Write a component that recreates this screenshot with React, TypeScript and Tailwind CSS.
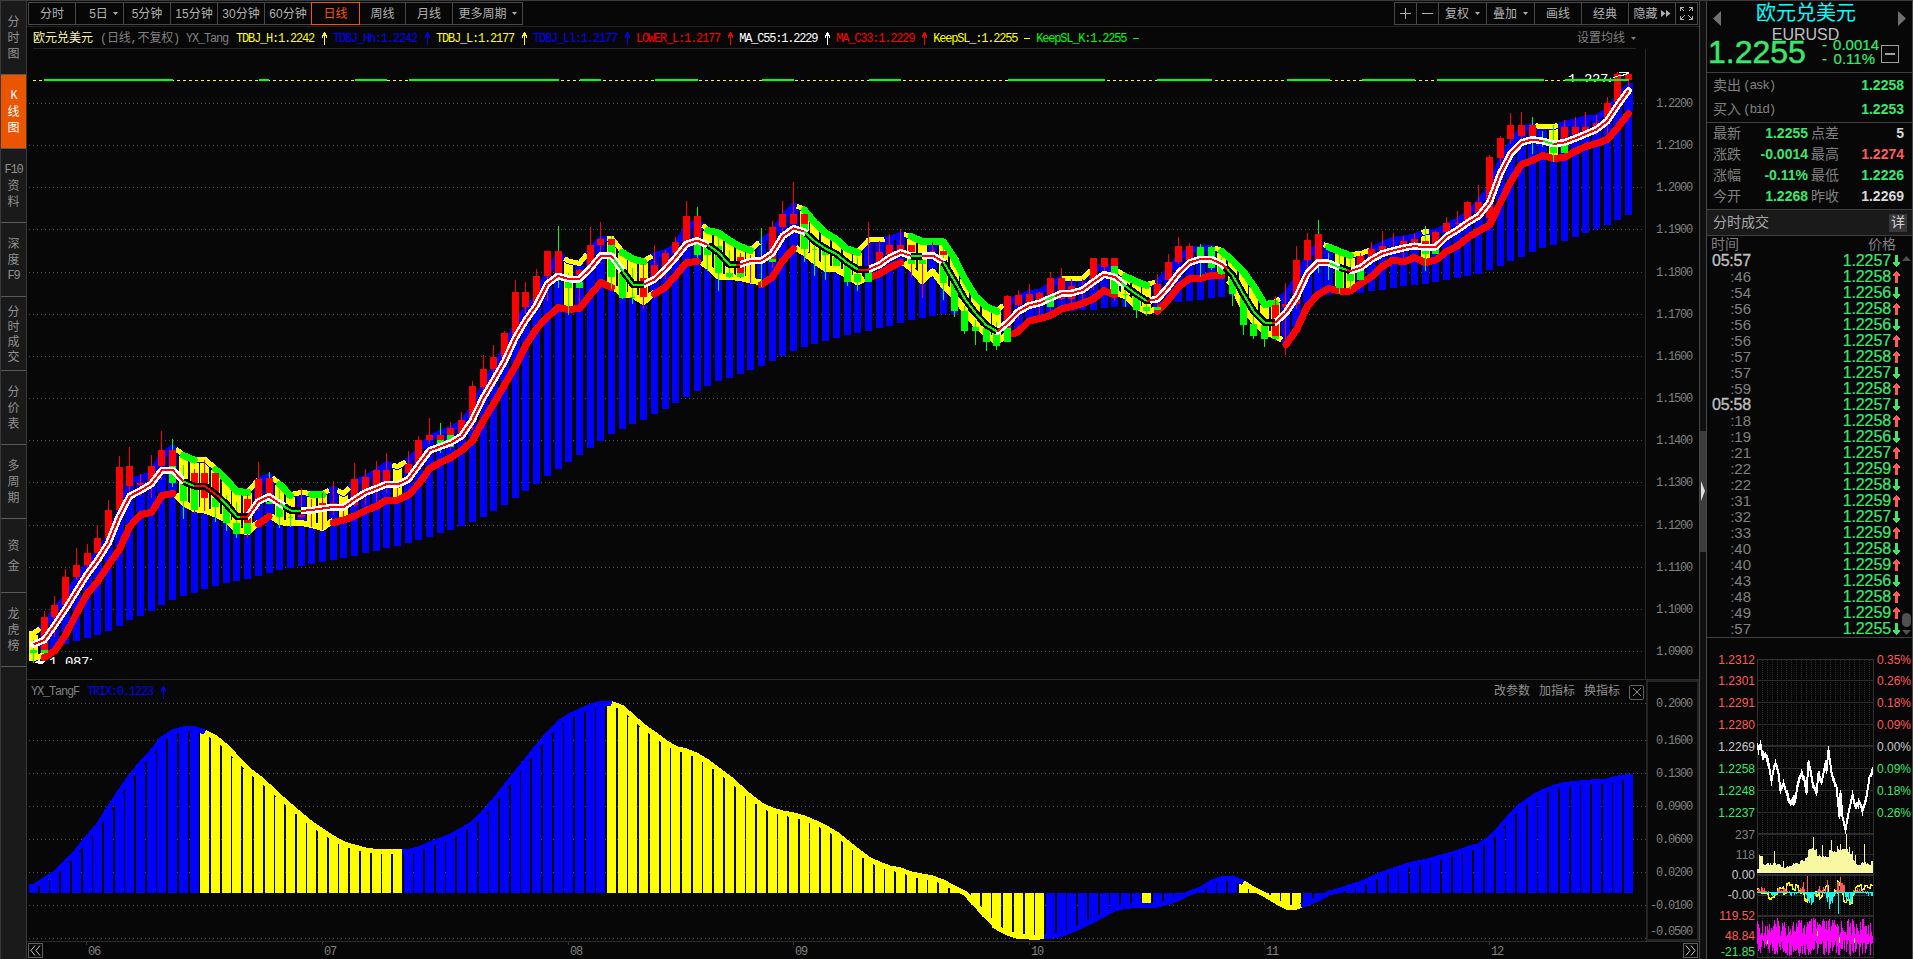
import { ReactNode } from "react";
import { clsx } from "clsx";

const STEP = 10.705;
const barX = (i: number) => 33.5 + i * STEP;

// Every series holds one value per daily bar, in canvas y.
const upper = [
  631.5, 623, 608, 595, 578, 563, 551.5, 535, 510, 478,
  475.5, 471.5, 453, 445, 452.5, 457, 457, 466.5, 476.5, 488.5,
  489.5, 478, 473.5, 481.5, 492.5, 490.5, 491.5, 491.5, 486.5, 491.5,
  480, 475.5, 469.5, 461.5, 464.5, 458.5, 447.5, 435.5, 430, 426.5,
  420, 406.5, 385, 366.5, 346.5, 325, 306.5, 295, 271.5, 252.5,
  259, 261.5, 248, 236, 236, 249.5, 256, 259, 252.5, 250,
  243.5, 225, 219, 227.5, 230, 237.5, 243.5, 247.5, 238.5, 231.5,
  215, 203, 207, 220, 230, 236.5, 246, 249.5, 238, 237.5,
  236.5, 232.5, 233.5, 238.5, 238.5, 239, 255, 276, 293.5, 303.5,
  308.5, 300, 295, 290.5, 289.5, 282.5, 276, 276, 276, 266.5,
  263.5, 267.5, 273.5, 278.5, 282.5, 279.5, 268.5, 255, 247.5, 246,
  245, 248.5, 257.5, 268.5, 283.5, 301.5, 300, 291.5, 276.5, 255,
  241.5, 244, 248.5, 252.5, 251.5, 247.5, 241.5, 237.5, 236, 234,
  229.5, 229.5, 223.5, 218.5, 211.5, 200, 186.5, 160, 141.5, 126.5,
  123.5, 124.5, 124.5, 121.5, 119, 115.5, 115, 108.5, 95, 83.5,
];

const lower = [
  660, 657.5, 650.5, 635, 614, 594, 581.5, 565, 550, 526.5,
  514.5, 512.5, 495.5, 493.5, 505, 511, 512.5, 516.5, 521.5, 531.5,
  534.5, 524, 516.5, 524, 525.5, 525, 527, 530, 522.5, 520,
  516, 510.5, 506.5, 500, 500, 495, 484, 468.5, 462.5, 457.5,
  450.5, 441, 421, 403.5, 385, 366.5, 345, 328.5, 317.5, 307.5,
  309.5, 308.5, 295, 282.5, 287.5, 296, 297.5, 304, 294, 287.5,
  275.5, 262.5, 261.5, 268.5, 278.5, 279, 280, 282.5, 284.5, 277.5,
  260.5, 248.5, 255, 263.5, 271, 271.5, 277.5, 284.5, 278, 274,
  267.5, 262.5, 270.5, 283, 273.5, 287.5, 298, 313, 326.5, 336.5,
  344, 336, 331.5, 321, 318.5, 315.5, 309, 306.5, 303.5, 299,
  290.5, 295, 298, 308.5, 313.5, 311.5, 300, 286.5, 278.5, 278.5,
  275.5, 275.5, 287, 310, 323, 334, 338, 344.5, 329.5, 306,
  294.5, 288.5, 291, 291, 283.5, 276.5, 266.5, 260, 262, 257.5,
  262.5, 260, 251.5, 246, 237.5, 231, 225, 203.5, 181.5, 164.5,
  160.5, 155.5, 158.5, 157.5, 151.5, 146.5, 143.5, 139.5, 127.5, 113.5,
];

const middle = [
  644.3, 640, 625, 609, 591.5, 574.5, 560, 543, 516.5, 496,
  490.5, 484, 470, 470, 481.5, 486, 486, 494, 504, 516.5,
  516.5, 501.5, 496.5, 503.5, 510.5, 511, 510, 508.5, 507, 507,
  499.5, 492.5, 488.5, 484, 484.5, 479.5, 465, 450.5, 446.5, 442.5,
  436, 420, 398, 380, 361.5, 338, 320, 305, 284, 276,
  279, 279, 268.5, 255.5, 256, 270.5, 284.5, 284.5, 279.5, 269.5,
  257.5, 244, 240.5, 245, 252.5, 264.5, 264.5, 261, 260.5, 253.5,
  236, 228.5, 231.5, 241.5, 248.5, 254, 262.5, 269.5, 269.5, 265,
  257.5, 252.5, 256, 256, 255.5, 262, 280, 299, 313, 325,
  331.5, 322.5, 311.5, 305.5, 303, 298, 293.5, 293, 290, 282,
  274.5, 277, 286, 294, 301, 299, 287, 273, 262.5, 259,
  259, 264, 275, 294, 311.5, 322.5, 322.5, 312.5, 296.5, 273.5,
  262.5, 263, 267.5, 271, 267.5, 259.5, 253.5, 250.5, 248, 246,
  247.5, 247, 236.5, 230, 222.5, 216, 202.5, 174, 153.5, 142.5,
  139.5, 141, 144, 142.5, 138.5, 134, 129.5, 121, 105, 90.5,
];

const base = [
  650, 648, 646, 643.5, 641, 637.5, 635, 631, 625.5, 620,
  615.5, 610.5, 605, 599.5, 595.5, 593, 589, 586, 583, 581,
  579, 576, 573, 570, 567.5, 566, 564, 562, 560, 558,
  556, 553, 551, 548, 546, 543, 540, 537, 533, 530,
  526, 522, 517, 511, 505, 497.5, 491, 484, 476, 469,
  461.5, 455, 448, 440.5, 434, 429, 423.5, 420, 414, 409,
  403, 397, 391, 386, 381, 378, 374, 370, 366, 361,
  356, 351, 347, 344, 341, 338, 335, 333, 331, 328,
  325.5, 323, 320, 317.5, 315.5, 313.5, 313.5, 313.5, 313.5, 313.5,
  313.5, 313.5, 313.5, 313, 313, 312, 311.5, 311, 310, 309.5,
  308, 306.5, 306.5, 306, 305, 304, 303, 302, 301, 299.5,
  297.5, 297, 296, 296, 296, 296, 296, 296, 296, 296,
  295.5, 295, 294, 293.5, 293, 291, 289.5, 287.5, 285.5, 284.5,
  283.5, 281.5, 279.5, 277.5, 275.5, 273.5, 269.5, 265.5, 260.5, 256.5,
  251.5, 247.5, 245, 241, 237, 233, 229, 225, 220, 215,
];

const trix = [
  884, 877.5, 870.5, 860, 849, 835.5, 823.5, 806.5, 790, 775,
  761.5, 750, 736.5, 729.5, 726.5, 726, 729.5, 735, 744, 755,
  766.5, 774.5, 784, 794, 803.5, 812.5, 821.5, 828.5, 835.5, 841.5,
  844.5, 847.5, 849, 849, 849.5, 849, 846.5, 841.5, 837.5, 833.5,
  827.5, 821, 811, 798.5, 785, 771.5, 758.5, 745, 732.5, 721,
  713.5, 708.5, 704, 700.5, 701, 705, 714.5, 724, 731.5, 739.5,
  746, 748.5, 753, 759.5, 767.5, 775.5, 785, 794.5, 802.5, 807.5,
  810.5, 812.5, 815.5, 820, 825, 831.5, 840, 848.5, 856.5, 861.5,
  865.5, 867.5, 871.5, 873.5, 875.5, 879.5, 885.5, 895, 907, 919,
  930, 935.5, 939, 939.5, 939.5, 939, 937, 933, 928, 923,
  917, 911.5, 909, 908, 907.5, 907.5, 905, 901, 895, 887,
  880, 876, 875.5, 880, 887, 897, 903.5, 909.5, 909.5, 906,
  901.5, 895, 888, 884, 881, 876, 871.5, 867.5, 864, 861,
  859, 856, 853, 850, 846, 843, 836.5, 825, 813, 802.5,
  795, 789, 785, 782, 781, 780, 779, 778.5, 775.5, 774,
];

// high, body top, body bottom, low, colour, then an optional green lower body
type Candle = [number, number, number, number, "r" | "g", number?, number?];
const candles: Candle[] = [
  [640, 650, 653, 663, "g"], [611, 617, 650, 653, "r", 650, 653], [596, 605, 617, 637, "r"], [569, 577, 605, 612, "r"], [548, 565, 577, 580, "r"],
  [544, 553, 565, 575, "r"], [525, 538, 553, 560, "r"], [500, 510, 538, 545, "r"], [456, 467, 510, 516, "r"], [447, 466, 486, 496, "r"],
  [474, 483, 485, 496, "r"], [455, 466, 484, 498, "r"], [431, 450, 466, 480, "r"], [439, 450, 466, 487, "g", 466, 483], [465, 482, 501, 519, "g"],
  [469, 473, 484, 513, "r", 488, 510], [460, 473, 498, 511, "r"], [472, 473, 494, 522, "g", 498, 507], [495, 503, 523, 531, "g"], [502, 523, 534, 538, "g"],
  [495, 499, 523, 538, "r", 523, 534], [462, 479, 499, 511, "r"], [472, 478, 496, 504, "g", 502, 504], [490, 505, 517, 528, "g"], [505, 517, 518, 527, "g"],
  [488, 515, 517, 518, "r"], [499, 510, 511, 527, "r"], [493, 503, 506, 530, "r"], [481, 503, 505, 515, "r"], [503, 507, 508, 518, "r"],
  [463, 479, 505, 507, "r"], [469, 477, 490, 505, "r"], [461, 470, 490, 502, "r"], [453, 470, 484, 493, "r"], [482, 487, 488, 498, "r"],
  [451, 464, 473, 483, "r"], [436, 440, 464, 466, "r"], [418, 435, 440, 444, "r"], [423, 435, 440, 453, "g", 440, 445], [422, 428, 435, 450, "r", 435, 447],
  [412, 420, 433, 438, "r"], [381, 386, 420, 430, "r"], [355, 369, 387, 395, "r"], [345, 357, 369, 377, "r"], [331, 333, 357, 362, "r"],
  [280, 292, 336, 340, "r"], [282, 292, 307, 314, "r"], [269, 276, 307, 308, "r"], [251, 251, 276, 301, "r"], [226, 251, 275, 288, "g"],
  [273, 281, 288, 315, "g"], [269, 270, 275, 303, "r", 282, 288], [227, 245, 268, 270, "r"], [222, 239, 245, 263, "r"], [236, 239, 245, 289, "g", 245, 277],
  [270, 272, 298, 299, "g"], [268, 297, 298, 304, "g"], [264, 278, 297, 309, "r"], [245, 265, 278, 280, "r"], [250, 253, 267, 279, "r"],
  [237, 242, 253, 256, "r"], [201, 216, 242, 244, "r"], [207, 216, 238, 258, "g", 244, 255], [244, 245, 255, 271, "g"], [237, 246, 273, 291, "g"],
  [250, 273, 277, 278, "g"], [253, 257, 273, 278, "r", 273, 277], [255, 258, 259, 283, "r"], [228, 258, 259, 287, "g"], [221, 227, 259, 268, "r", 259, 262],
  [201, 214, 227, 234, "r"], [182, 214, 224, 228, "r"], [214, 214, 224, 262, "g", 224, 249], [238, 249, 250, 276, "g"], [247, 250, 255, 280, "g"],
  [254, 257, 266, 266, "g"], [262, 265, 282, 286, "g"], [257, 274, 282, 291, "g"], [222, 265, 266, 282, "r", 272, 282], [241, 252, 263, 265, "r"],
  [234, 245, 255, 258, "r"], [229, 245, 252, 254, "r"], [245, 245, 252, 277, "r", 257, 264], [258, 260, 264, 298, "r", 260, 264], [242, 251, 252, 257, "r"],
  [248, 251, 255, 300, "g", 260, 283], [280, 283, 311, 317, "g"], [306, 311, 331, 334, "g"], [320, 327, 331, 345, "g"], [322, 328, 342, 351, "g"],
  [322, 333, 346, 350, "g"], [295, 296, 328, 330, "r", 328, 342], [290, 295, 305, 320, "r"], [284, 294, 305, 307, "r"], [292, 293, 300, 315, "r"],
  [272, 278, 300, 311, "r", 300, 307], [268, 278, 299, 300, "r"], [279, 286, 299, 303, "r"], [279, 289, 290, 300, "r"], [258, 258, 280, 290, "r"],
  [258, 258, 267, 274, "r"], [258, 258, 266, 301, "r", 266, 294], [288, 294, 295, 307, "g"], [290, 292, 310, 318, "g"], [303, 307, 311, 316, "g"],
  [274, 284, 300, 306, "r", 307, 310], [254, 262, 280, 287, "r"], [237, 246, 262, 264, "r"], [243, 246, 260, 262, "r"], [244, 247, 257, 277, "g"],
  [246, 247, 268, 270, "g"], [257, 265, 274, 275, "g"], [272, 278, 294, 306, "g"], [290, 294, 325, 335, "g"], [315, 324, 336, 339, "g"],
  [322, 325, 339, 347, "g"], [296, 305, 336, 341, "r", 336, 339], [283, 304, 307, 355, "r"], [246, 260, 304, 309, "r"], [233, 240, 260, 270, "r"],
  [220, 234, 263, 273, "g"], [253, 262, 263, 280, "g"], [253, 269, 288, 294, "g"], [260, 273, 281, 289, "g"], [253, 256, 267, 268, "r", 270, 280],
  [242, 249, 258, 260, "r"], [231, 246, 250, 253, "r"], [233, 247, 248, 250, "r"], [236, 241, 247, 258, "r"], [233, 239, 245, 247, "r"],
  [226, 241, 245, 271, "g", 250, 254], [231, 232, 247, 248, "r", 249, 254], [217, 223, 232, 236, "r"], [211, 223, 224, 233, "r"], [201, 202, 220, 223, "r"],
  [185, 202, 213, 216, "r"], [155, 157, 218, 220, "r"], [136, 138, 158, 168, "r"], [113, 125, 139, 144, "r"], [112, 125, 136, 142, "r"],
  [117, 125, 138, 154, "g"], [131, 140, 141, 147, "g"], [125, 147, 153, 162, "g"], [120, 127, 140, 142, "r", 145, 153], [117, 127, 135, 138, "r"],
  [112, 127, 134, 137, "r"], [115, 123, 129, 135, "r"], [97, 103, 120, 135, "r"], [72, 74, 102, 105, "r"], [72, 74, 80, 90, "r"],
];

type Range = [number, number];
const yellowBars: Range[] = [[0, 0], [14, 20], [23, 24], [26, 27], [29, 29], [34, 34], [50, 50], [54, 57], [63, 67], [72, 77], [82, 83], [85, 90], [101, 104], [111, 116], [122, 123], [130, 130], [142, 142]];
const yellowTop: Range[] = [[-0.4, 0.6], [13.3, 21], [22.3, 27.6], [28.4, 29.5], [33.5, 34.8], [49.6, 51.7], [53.6, 57.8], [62.5, 67.8], [71.3, 79.5], [81.3, 90.6], [96, 99.3], [101, 104.8], [110.3, 116.4], [120.5, 124.8], [129.7, 130.4], [140.3, 142.4]];
const yellowBottom: Range[] = [[-0.4, 1], [13.3, 21], [22.2, 28], [54, 58], [62.4, 68], [71.2, 77.6], [81.3, 91], [101, 105], [111.6, 116.6]];
const redBand: Range[] = [[1, 13], [21, 22], [28, 54], [58, 62], [68, 71], [78, 81], [91.5, 101], [105, 111], [117, 149]];
const greenBand: Range[] = [[14, 15], [17, 20], [23, 24], [26, 27], [55, 57], [63, 67], [72, 77], [82, 90], [102, 104], [111, 116], [121, 123]];
const blackMid: Range[] = [[14, 20], [23.4, 25], [55, 57], [63, 66], [72.2, 78], [82, 83], [85, 90], [102, 104.3], [111.3, 116], [122, 123]];
const greenMid: Range[] = [[14, 15], [17.5, 19.3], [23, 25], [54.2, 57], [63, 65.6], [72, 77], [82, 83], [85, 90], [94.5, 95.4], [101.6, 104], [111.5, 115.7], [121, 122.7], [141, 142]];
const keepGreen: Range[] = [[44, 173], [259, 269], [355, 387], [409, 559], [580, 601], [655, 698], [762, 794], [869, 901], [1008, 1105], [1157, 1212], [1287, 1330], [1362, 1415], [1437, 1544], [1565, 1629]];
const trixYellow: Range[] = [[16, 34], [54, 94], [104, 104], [113, 118]];
const trixYellowLine: Range[] = [[16, 34.4], [54, 94.4], [113, 118.4]];

const inside = (ranges: Range[], i: number) => ranges.some(([a, b]) => i >= a && i <= b);

function valueAt(data: number[], p: number) {
  const c = Math.max(0, Math.min(data.length - 1, p));
  const i = Math.floor(c);
  const next = data[Math.min(i + 1, data.length - 1)];
  return data[i] + (next - data[i]) * (c - i);
}

function points(data: number[], [a, b]: Range, offset = 0) {
  const stops = [a];
  for (let i = Math.floor(a) + 1; i < b; i++) stops.push(i);
  stops.push(b);
  return stops.map((p) => `${barX(p).toFixed(1)},${(valueAt(data, p) + offset).toFixed(1)}`).join(" ");
}

interface TraceProps {
  data: number[];
  ranges: Range[];
  color: string;
  width: number;
  offset?: number;
  cap?: "round" | "butt";
}

function Trace({ data, ranges, color, width, offset = 0, cap = "butt" }: TraceProps) {
  return (
    <g fill="none" stroke={color} strokeWidth={width} strokeLinecap={cap} strokeLinejoin="round">
      {ranges.map((r) => (
        <polyline key={r[0]} points={points(data, r, offset)} />
      ))}
    </g>
  );
}

const all: Range[] = [[0, 149]];
const mainGrid = [103, 145, 187, 229, 272, 314, 356, 398, 440, 482, 525, 567, 609, 651];
const lowerGrid = [703, 740, 773, 806, 839, 872, 905, 938];
const lowerLabels = ["0.2000", "0.1600", "0.1300", "0.0900", "0.0600", "0.0200", "-0.0100", "-0.0500"];
const mono = "font-['Liberation_Mono','Noto_Sans_CJK_SC',monospace] text-[12px] tracking-[-1.2px]";
const monoLarge = "font-['Liberation_Mono',monospace] text-[14px] tracking-[-0.4px]";

function Grid({ rows }: { rows: number[] }) {
  return (
    <g stroke="#505050" strokeDasharray="1 3">
      {rows.map((y) => (
        <line key={y} x1="29" x2="1648" y1={y + 0.5} y2={y + 0.5} />
      ))}
    </g>
  );
}

function MainChart() {
  return (
    <svg className="block h-[630px] w-[1672px]" viewBox="27 49 1672 630" shapeRendering="crispEdges">
      <Grid rows={mainGrid} />
      <line x1="33" x2="1629" y1="80.5" y2="80.5" stroke="#ffff00" strokeDasharray="3 3" />

      {base.map((b, i) => (
        <rect
          key={i}
          x={Math.round(barX(i) - 3.5)}
          y={upper[i] + 2}
          width="7"
          height={Math.max(b, lower[i]) - upper[i] - 2}
          fill="#0000ff"
        />
      ))}
      {upper.map((u, i) => (
        <rect
          key={i}
          x={Math.round(barX(i) - 4.5)}
          y={u + 3}
          width="9"
          height={lower[i] - u - 6}
          fill={inside(yellowBars, i) ? "#ffff00" : "#0000ff"}
        />
      ))}
      <Trace data={upper} ranges={[[0.6, 149.4]]} color="#0000ff" width={6} offset={2.5} />
      <Trace data={upper} ranges={yellowTop} color="#ffff00" width={5} offset={2} />
      <Trace data={lower} ranges={yellowBottom} color="#ffff00" width={6} offset={-2} />
      <rect x="29" y="633" width="5" height="27" fill="#ffff00" />
      <Trace data={lower} ranges={redBand} color="#ff0000" width={7} cap="round" />
      <Trace data={upper} ranges={greenBand} color="#00ff00" width={7} offset={3} cap="round" />

      {candles.map(([high, top, bottom, low, color, gTop, gBottom], i) => {
        const x = Math.round(barX(i) - 3.5);
        const fill = color === "r" ? "#ff0000" : "#00ff00";
        const split = gTop !== undefined && gBottom !== undefined;
        const wickOnly = bottom - top <= 1;
        const redTop = split || i === 49 || i === 120 || i === 140;
        return (
          <g key={i}>
            <rect x={x + 3} y={high} width="1" height={Math.max(low - high, 1)} fill={fill} />
            {!(wickOnly && split) && (
              <rect
                x={wickOnly ? x + 1 : x}
                y={top}
                width={wickOnly ? 5 : 7}
                height={bottom - top}
                fill={redTop ? "#ff0000" : fill}
              />
            )}
            {split && <rect x={x} y={gTop} width="7" height={gBottom - gTop} fill="#00ff00" />}
          </g>
        );
      })}

      <Trace data={middle} ranges={all} color="#ffffff" width={7} cap="round" />
      <Trace data={middle} ranges={blackMid} color="#000000" width={7} />
      <Trace data={middle} ranges={all} color="#ff0000" width={2} />
      <Trace data={middle} ranges={greenMid} color="#00ff00" width={2} />

      <svg x="1560" y="70" width="51" height="12" viewBox="1560 70 51 12">
        <text x="1568" y="84" fill="#fff" className={monoLarge}>1.2274</text>
      </svg>
      <svg x="44" y="655" width="48" height="9" viewBox="44 655 48 9">
        <text x="49" y="667" fill="#fff" className={monoLarge}>1.0871</text>
      </svg>
      <path d="M1613 78l7-3M1619 72h9v1h-2v1h-3v1h-3" stroke="#fff" fill="none" />
      <path d="M34 663l6-4v2h5l-3 3z" fill="#fff" />

      {keepGreen.map(([a, b]) => (
        <rect key={a} x={a} y="79" width={b - a} height="2" fill="#00ff00" />
      ))}

      <line x1="1645.5" x2="1645.5" y1="49" y2="679" stroke="#2a2a2a" />
      {mainGrid.map((y, i) => (
        <text key={y} x="1692" y={y + 4} textAnchor="end" fill="#808080" className={mono}>
          {(1.22 - i * 0.01).toFixed(4)}
        </text>
      ))}
    </svg>
  );
}

function TrixChart() {
  const zero = 893;
  const inner = trix.map((t) => t + Math.max(-2.5, Math.min(2.5, zero - t)));
  return (
    <svg className="block h-[261px] w-[1672px]" viewBox="27 680 1672 261" shapeRendering="crispEdges">
      <Grid rows={lowerGrid} />
      {inner.map((t, i) => (
        <rect
          key={i}
          x={Math.round(barX(i) - 4.5)}
          y={Math.min(t, zero)}
          width="9"
          height={Math.abs(zero - t)}
          fill={inside(trixYellow, i) ? "#ffff00" : "#0000ff"}
        />
      ))}
      <Trace data={inner} ranges={[[-0.4, 149.4]]} color="#0000ff" width={5} />
      <Trace data={inner} ranges={trixYellowLine} color="#ffff00" width={5} />
      <rect x="1647" y="681" width="51" height="258.5" fill="#070707" stroke="#242424" strokeWidth="2" />
      {lowerGrid.map((y, i) => (
        <text key={y} x="1692" y={(i === 7 ? 931 : y) + 4} textAnchor="end" fill="#808080" className={mono}>
          {lowerLabels[i]}
        </text>
      ))}
    </svg>
  );
}

function Caret({ className }: { className?: string }) {
  return (
    <svg className={clsx("h-[3px] w-[5px]", className)} viewBox="0 0 5 3">
      <path d="M0 0h5L2.5 3z" fill="currentColor" />
    </svg>
  );
}

const periods = [
  { label: "分时", width: "w-[48px]" },
  { label: "5日", width: "w-[49px]", caret: true },
  { label: "5分钟", width: "w-[48px]" },
  { label: "15分钟", width: "w-[48px]" },
  { label: "30分钟", width: "w-[48px]" },
  { label: "60分钟", width: "w-[48px]" },
  { label: "日线", width: "w-[49px]", active: true },
  { label: "周线", width: "w-[47px]" },
  { label: "月线", width: "w-[48px]" },
  { label: "更多周期", width: "w-[71px]", caret: true },
];

const tools: { content: ReactNode; width: string }[] = [
  {
    width: "w-[23px]",
    content: <svg className="size-[11px]" viewBox="0 0 11 11" shapeRendering="crispEdges"><path d="M0 5.5h11M5.5 0v11" stroke="currentColor" /></svg>,
  },
  {
    width: "w-[23px]",
    content: <svg className="size-[11px]" viewBox="0 0 11 11" shapeRendering="crispEdges"><path d="M0 5.5h11" stroke="currentColor" /></svg>,
  },
  { width: "w-[49px]", content: <>复权<Caret className="ml-1.5" /></> },
  { width: "w-[49px]", content: <>叠加<Caret className="ml-1.5" /></> },
  { width: "w-[48px]", content: "画线" },
  { width: "w-[48px]", content: "经典" },
  {
    width: "w-[48px]",
    content: <>隐藏<svg className="ml-[3px] h-[7px] w-[10px]" viewBox="0 0 10 7"><path d="M0 0l4.5 3.5L0 7zM5 0l4.5 3.5L5 7z" fill="currentColor" /></svg></>,
  },
  {
    width: "w-[23px]",
    content: (
      <svg className="size-[13px]" viewBox="0 0 13 13" fill="none" stroke="currentColor" shapeRendering="crispEdges">
        <path d="M.5 4V.5H4M.5.5l4 4M9 .5h3.5V4M12.500 .5l-4 4M.5 9v3.500H4M.5 12.500l4-4M12.500 9v3.500H9M12.500 12.500l-4-4" />
      </svg>
    ),
  },
];

function Toolbar() {
  return (
    <div className="flex h-[26px] justify-between border-b border-[#222] pt-[1px] pr-px pl-px text-[12px] text-[#b0b0b0]">
      <div className="flex">
        {periods.map((p) => (
          <div
            key={p.label}
            className={clsx(
              "-mr-px flex h-[23px] items-center justify-center border whitespace-nowrap",
              p.width,
              p.active ? "relative z-10 border-[#f05a00] text-[#f05a00]" : "border-[#484848]",
              p.label === "5日" && "pl-2"
            )}
          >
            {p.label}
            {p.caret && <Caret className="ml-[5px]" />}
          </div>
        ))}
      </div>
      <div className="flex pr-px">
        {tools.map((t, i) => (
          <div key={i} className={clsx("-mr-px flex h-[23px] items-center justify-center border border-[#484848]", t.width)}>
            {t.content}
          </div>
        ))}
      </div>
    </div>
  );
}

function UpArrow() {
  return (
    <svg className="mr-[2px] ml-[5px] h-[13px] w-[12px] shrink-0" viewBox="0 0 12 13" fill="none" stroke="currentColor" shapeRendering="crispEdges">
      <path d="M5.500 13V0M4.500 1v3M6.500 1v3M3.500 3v3M7.500 3v3" />
    </svg>
  );
}

const indicators = [
  { text: "TDBJ_H:1.2242", color: "text-[#ffff00]" },
  { text: "TDBJ_Hh:1.2242", color: "text-[#0000ff]" },
  { text: "TDBJ_L:1.2177", color: "text-[#ffff00]" },
  { text: "TDBJ_Ll:1.2177", color: "text-[#0000ff]" },
  { text: "LOWER_L:1.2177", color: "text-[#ff0000]" },
  { text: "MA_C55:1.2229", color: "text-white" },
  { text: "MA_C33:1.2229", color: "text-[#ff0000]" },
  { text: "KeepSL_:1.2255", color: "text-[#ffff00]", dash: true },
  { text: "KeepSL_K:1.2255", color: "text-[#00ff00]", dash: true },
];

function IndicatorRow() {
  return (
    <div className={clsx("ml-[6px] flex h-[22px] w-[1603px] items-center border-b border-[#262626] pt-[2px] whitespace-nowrap", mono)}>
      <span className="w-[67px] tracking-normal text-[#ffffa0]">欧元兑美元</span>
      <span className="w-[86px] tracking-[-0.2px] text-[#808080]">(日线,不复权)</span>
      <span className="w-[50px] text-[#808080]">YX_Tang</span>
      {indicators.map((n) => (
        <span key={n.text} className={clsx("flex items-center", n.color)}>
          {n.text}
          {n.dash ? <span className="mr-[6px] ml-[7px] h-px w-[6px] bg-current" /> : <UpArrow />}
        </span>
      ))}
      <span className="ml-auto flex items-center tracking-normal text-[#808080]">
        设置均线
        <Caret className="ml-[6px]" />
      </span>
    </div>
  );
}

const sideItems = [
  ["分", "时", "图"],
  ["K", "线", "图"],
  ["F10", "资", "料"],
  ["深", "度", "F9"],
  ["分", "时", "成", "交"],
  ["分", "价", "表"],
  ["多", "周", "期"],
  ["资", "金"],
  ["龙", "虎", "榜"],
];

function Sidebar() {
  return (
    <div className="flex h-full w-[27px] flex-col border-r border-l border-[#3a3a3a] bg-[#1a1a1a]">
      {sideItems.map((chars, i) => (
        <div
          key={i}
          className={clsx(
            "flex h-[74px] flex-col items-center justify-center border-b border-[#585858] pt-px text-[12px]",
            i === 1 ? "bg-[#eb5500] text-white" : "text-[#909090]"
          )}
        >
          {chars.map((c, n) => (
            <span
              key={n}
              className={clsx(
                "flex items-center",
                chars.length === 2 ? "h-[20px]" : chars.length === 4 ? "h-[15px]" : "h-[16px]",
                /[A-Z]/.test(c) && mono
              )}
            >
              {c}
            </span>
          ))}
        </div>
      ))}
    </div>
  );
}

const months = [
  { label: "06", width: "w-[236px]" },
  { label: "07", width: "w-[246px]" },
  { label: "08", width: "w-[225px]" },
  { label: "09", width: "w-[236px]" },
  { label: "10", width: "w-[235px]" },
  { label: "11", width: "w-[225px]" },
  { label: "12", width: "w-[60px]" },
];

function MonthAxis() {
  return (
    <div className="flex h-[18px] border-t border-[#2c2c2c] pl-px text-[#808080]">
      <div className="mt-px flex size-[15px] items-center justify-center border border-[#606060] text-[#c8c8c8]">
        <svg className="size-[11px]" viewBox="0 0 11 11" fill="none" stroke="currentColor"><path d="M5 0.500L1 5.500l4 5M10 0.500L6 5.500l4 5" /></svg>
      </div>
      <div className="ml-[43px] flex flex-1">
        {months.map((m) => (
          <div key={m.label} className={clsx("flex items-center", m.width, mono)}>
            <span className="h-[3px] w-px self-start bg-[#333]" />
            <span className="ml-px pt-[2px]">{m.label}</span>
          </div>
        ))}
      </div>
      <div className="mt-px mr-px flex size-[15px] items-center justify-center border border-[#606060] text-[#c8c8c8]">
        <svg className="size-[11px]" viewBox="0 0 11 11" fill="none" stroke="currentColor"><path d="M1 0.500l4 5-4 5M6 0.500l4 5-4 5" /></svg>
      </div>
    </div>
  );
}

const stats = [
  ["最新", "1.2255", "点差", "5", "text-[#d8d8d8]"],
  ["涨跌", "-0.0014", "最高", "1.2274", "text-[#ff5a5a]"],
  ["涨幅", "-0.11%", "最低", "1.2226", "text-[#3ce66e]"],
  ["今开", "1.2268", "昨收", "1.2269", "text-[#d8d8d8]"],
];

const ticks: [string, string, boolean][] = [
  ["05:57", "1.2257", false], [":46", "1.2258", true], [":54", "1.2256", false], [":56", "1.2258", true],
  [":56", "1.2256", false], [":56", "1.2257", true], [":57", "1.2258", true], [":57", "1.2257", false],
  [":59", "1.2258", true], ["05:58", "1.2257", false], [":18", "1.2258", true], [":19", "1.2256", false],
  [":21", "1.2257", true], [":22", "1.2259", true], [":22", "1.2258", false], [":31", "1.2259", true],
  [":32", "1.2257", false], [":33", "1.2259", true], [":40", "1.2258", false], [":40", "1.2259", true],
  [":43", "1.2256", false], [":48", "1.2258", true], [":49", "1.2259", true], [":57", "1.2255", false],
];

function TickArrow({ up }: { up: boolean }) {
  return (
    <svg className={clsx("ml-[2px] h-[12px] w-[7px]", up ? "text-[#ff5a5a]" : "rotate-180 text-[#3ce66e]")} viewBox="0 0 7 12" shapeRendering="crispEdges">
      <path d="M3 0h1v1h1v1h1v1h1v2H5v7H2V5H0V3h1V2h1V1h1z" fill="currentColor" />
    </svg>
  );
}

const leftLabels: [string, number, string][] = [
  ["1.2312", 660, "#ff5a5a"], ["1.2301", 681, "#ff5a5a"], ["1.2291", 703, "#ff5a5a"], ["1.2280", 725, "#ff5a5a"],
  ["1.2269", 747, "#c8c8c8"], ["1.2258", 769, "#3ce66e"], ["1.2248", 791, "#3ce66e"], ["1.2237", 813, "#3ce66e"],
  ["237", 835, "#808080"], ["118", 855, "#808080"], ["0.00", 875, "#c8c8c8"], ["-0.00", 895, "#c8c8c8"],
  ["119.52", 916, "#ff5a5a"], ["48.84", 936, "#ff5a5a"], ["-21.85", 952, "#3ce66e"],
];
const rightLabels: [string, number, string][] = [
  ["0.35%", 660, "#ff5a5a"], ["0.26%", 681, "#ff5a5a"], ["0.18%", 703, "#ff5a5a"], ["0.09%", 725, "#ff5a5a"],
  ["0.00%", 747, "#c8c8c8"], ["0.09%", 769, "#3ce66e"], ["0.18%", 791, "#3ce66e"], ["0.26%", 813, "#3ce66e"],
];

const intraday = [
  [0, 745], [1, 750], [3, 744], [5, 756], [8, 755], [11, 763], [14, 781], [16, 770], [18, 763], [21, 773],
  [23, 791], [26, 783], [29, 793], [33, 803], [38, 799], [40, 785], [44, 773], [47, 780], [49, 793], [51, 762],
  [53, 770], [55, 783], [59, 793], [61, 773], [64, 783], [68, 763], [69, 771], [71, 750], [74, 773], [76, 780],
  [79, 787], [82, 817], [83, 793], [85, 817], [88, 830], [91, 813], [95, 795], [98, 807], [102, 802], [105, 811],
  [109, 797], [112, 777], [115, 771],
];

const noise = (n: number) => {
  const s = Math.sin(n * 12.9898) * 43758.5453;
  return s - Math.floor(s);
};

function intradayAt(x: number) {
  const n = intraday.findIndex((p) => p[0] >= x);
  if (n <= 0) return intraday[0][1];
  const [x0, y0] = intraday[n - 1];
  const [x1, y1] = intraday[n];
  return y0 + ((y1 - y0) * (x - x0)) / (x1 - x0);
}

const volume = [18, 17, 19, 8, 10, 8, 22, 9, 8, 12, 6, 5, 7, 8, 10, 9, 13, 12, 16, 33, 24, 36, 24, 18, 28, 17, 16, 33, 26, 22, 27, 29, 24, 39, 26, 22, 18, 12, 8, 10, 29, 10, 8, 12];

function MiniChart() {
  const xs = Array.from({ length: 116 }, (_, i) => i);
  // The two MACD lines swing wider through the busy middle of the session.
  const swing = (x: number, seed: number) => {
    const amp = x > 44 && x < 98 ? 13 : 7;
    return 892 - (Math.sin(x / 6 + 2.2) * 0.5 + (noise(Math.floor(x / 3) + seed) - 0.5) * 1.6) * amp;
  };
  return (
    <svg className="block h-[321px] w-[205px]" viewBox="1707 638 205 321" shapeRendering="crispEdges">
      <g stroke="#2c2c2c" strokeDasharray="1 1">
        {Array.from({ length: 23 }, (_, i) => (
          <line key={i} x1={Math.round(1762 + i * 4.85) + 0.5} x2={Math.round(1762 + i * 4.85) + 0.5} y1="660" y2="957" />
        ))}
      </g>
      <g stroke="#2c2c2c">
        {[680.5, 702.5, 724.5, 768.5, 790.5, 812.5, 854.5, 895.5, 936.5].map((y) => (
          <line key={y} x1="1757" x2="1874" y1={y} y2={y} />
        ))}
      </g>
      <g stroke="#2c2c2c" strokeWidth="2">
        {[746, 834, 875, 916].map((y) => (
          <line key={y} x1="1757" x2="1874" y1={y} y2={y} />
        ))}
      </g>
      <rect x="1757.5" y="659.5" width="116" height="298" fill="none" stroke="#303030" />

      <polyline
        fill="none"
        stroke="#fff"
        strokeWidth="2"
        points={xs.map((x) => `${1757.5 + x},${intradayAt(x)}`).join(" ")}
      />
      {xs.map((x) => {
        const h = 4 + noise(x) * 7;
        return <rect key={x} x={1757 + x} y={intradayAt(x) - h / 2} width="1" height={h} fill="#fff" />;
      })}
      {xs.map((x) => {
        const n = Math.floor(x / 2.65);
        const floor = Math.min(volume[n], volume[Math.min(n + 1, 43)], 24) * 0.95;
        const h = x < 2 ? 4 : x % 3 === 2 ? volume[n] : floor + noise(x) * 2;
        return <rect key={x} x={1757 + x} y={873 - h} width="1" height={h} fill="#f8f8a0" />;
      })}

      <polyline fill="none" stroke="#fff" points={xs.map((x) => `${1758 + x},${swing(x + 1, 3)}`).join(" ")} />
      <polyline fill="none" stroke="#ffff00" strokeWidth="1.5" points={xs.map((x) => `${1757 + x},${swing(x, 3)}`).join(" ")} />
      {xs.map((x) => {
        const amp = x > 44 && x < 98 ? 13 : 5;
        const v = Math.sin(x / 3.1) * 0.5 + noise(x + 9) - 0.5;
        const h = Math.max(1, Math.abs(v) * amp);
        return <rect key={x} x={1757 + x} y={v > 0 ? 892 - h : 892} width="1" height={h} fill={v > 0 ? "#ff5a5a" : "#00ffff"} />;
      })}
      <path d="M1757 892.500h116M1838.500 893v21M1829.500 893v16" stroke="#00ffff" />
      <path d="M1807.500 892v-16M1840.500 892v-15M1827.500 892v-12" stroke="#ff5a5a" />

      {xs.map((x) => {
        const top = 918 + noise(x + 7) * 18;
        const bottom = 956 - noise(x + 31) * 16;
        return <rect key={x} x={1757 + x} y={top} width="1" height={bottom - top} fill="#ff00ff" />;
      })}
      <path d="M1767.500 940v4M1817.500 931v5M1839.500 937v6M1854.500 938v5" stroke="#ffff00" />

      {leftLabels.map(([t, y, c]) => (
        <text key={t} x="1755" y={y + 4} textAnchor="end" fill={c} className="font-['Liberation_Sans',sans-serif] text-[12px]">{t}</text>
      ))}
      {rightLabels.map(([t, y, c]) => (
        <text key={y} x="1877" y={y + 4} fill={c} className="font-['Liberation_Sans',sans-serif] text-[12px]">{t}</text>
      ))}
    </svg>
  );
}

function QuotePanel() {
  const green = "text-[#3ce66e]";
  return (
    <div className="flex h-full w-[206px] flex-col border-r border-[#484848] text-[14px] text-[#808080]">
      <div className="flex h-[72px] flex-col border-b border-[#404040]">
        <div className="flex h-[27px] items-start justify-between px-[6px]">
          <svg className="mt-[10px] h-[15px] w-[8px]" viewBox="0 0 8 15"><path d="M8 0v15L0 7.500z" fill="#707070" /></svg>
          <span className="mr-[7px] text-[20px] leading-[24px] text-[#00ffff]">欧元兑美元</span>
          <svg className="mt-[10px] h-[15px] w-[8px]" viewBox="0 0 8 15"><path d="M0 0v15l8-7.500z" fill="#707070" /></svg>
        </div>
        <div className="pr-[8px] text-center text-[16px] leading-[14px] text-[#c0c0c0]">EURUSD</div>
        <div className={clsx("-mt-[4px] flex", green)}>
          <span className="w-[115px] pl-px text-[32px] leading-[28px] [-webkit-text-stroke:0.5px]">1.2255</span>
          <div className="w-[58px] text-[15px] leading-[14px] [-webkit-text-stroke:0.2px]">
            <div className="flex justify-between pr-px"><span>-</span><span>0.0014</span></div>
            <div className="flex justify-between pr-[5px]"><span>-</span><span>0.11%</span></div>
          </div>
          <div className="mt-[7px] ml-px flex size-[18px] items-center justify-center border border-[#a0a0a0]">
            <span className="h-[2px] w-[10px] bg-[#a0a0a0]" />
          </div>
        </div>
      </div>
      <div className="flex h-[50px] flex-col border-b border-[#404040] pr-[8px] pl-[6px]">
        {[["卖出", "(ask)", "1.2258"], ["买入", "(bid)", "1.2253"]].map(([label, en, value]) => (
          <div key={label} className="flex h-[24px] items-center">
            {label}
            <span className="ml-[2px] pt-[2px] font-['Liberation_Mono',monospace] text-[13px] tracking-[-1.4px]">{en}</span>
            <span className={clsx("ml-auto font-bold", green)}>{value}</span>
          </div>
        ))}
      </div>
      <div className="flex h-[87px] flex-col border-b border-[#404040] pr-[8px] pl-[6px]">
        {stats.map(([a, av, b, bv, color]) => (
          <div key={a} className="flex h-[21px] items-center">
            <span className="w-[28px]">{a}</span>
            <span className={clsx("w-[67px] text-right font-bold", green)}>{av}</span>
            <span className="ml-[3px]">{b}</span>
            <span className={clsx("ml-auto font-bold", color)}>{bv}</span>
          </div>
        ))}
      </div>
      <div className="flex h-[26px] items-center justify-between border-b border-[#404040] bg-[#1a1a1a] pr-[5px] pl-[6px] text-[#a8a8a8]">
        分时成交
        <span className="flex size-[18px] items-center justify-center bg-[#383838] text-[#d0d0d0]">详</span>
      </div>
      <div className="flex h-[402px] border-b border-[#404040] pl-[4px]">
        <div className="w-[189px]">
          <div className="flex h-[17px] items-center justify-between pr-[4px]">
            <span>时间</span>
            <span>价格</span>
          </div>
          {ticks.map(([time, price, up], i) => (
            <div key={i} className="flex h-[16px] items-center text-[16px] leading-[16px]">
              <span
                className={clsx(
                  "w-[40px] text-right",
                  time.length > 3 ? "tracking-[-0.2px] text-[#c0c0c0] [-webkit-text-stroke:0.3px]" : "text-[15px]"
                )}
              >
                {time}
              </span>
              <span className={clsx("ml-auto tracking-[-0.1px] [-webkit-text-stroke:0.2px]", green)}>{price}</span>
              <TickArrow up={up} />
            </div>
          ))}
        </div>
        <div className="flex flex-1 flex-col items-end pt-[20px] pr-px pb-[2px]">
          <svg className="h-[5px] w-[9px]" viewBox="0 0 9 5"><path d="M0 5h9L4.500 0z" fill="#505050" /></svg>
          <div className="mt-auto h-[14px] w-[9px] rounded-full bg-[#505050]" />
          <svg className="mt-[3px] h-[5px] w-[9px]" viewBox="0 0 9 5"><path d="M0 0h9L4.500 5z" fill="#505050" /></svg>
        </div>
      </div>
      <MiniChart />
    </div>
  );
}

export default function App() {
  return (
    <div className="flex h-[959px] w-[1913px] overflow-hidden border-t border-[#3c3c3c] bg-[#070707] font-['Liberation_Sans','Noto_Sans_CJK_SC',sans-serif]">
      <Sidebar />
      <div className="flex w-[1672px] flex-col">
        <Toolbar />
        <IndicatorRow />
        <MainChart />
        <div className="relative border-t border-[#2c2c2c]">
          <TrixChart />
          <div className={clsx("absolute top-[3px] left-[4px] flex w-[1613px] items-center text-[#808080]", mono)}>
            YX_TangF
            <span className="ml-[8px] flex items-center text-[#0000ff]">
              TRIX:0.1223
              <UpArrow />
            </span>
            <span className="ml-auto flex items-center gap-[9px] tracking-normal text-[#909090]">
              <span>改参数</span>
              <span>加指标</span>
              <span>换指标</span>
              <span className="flex size-[15px] items-center justify-center rounded-xs border border-[#606060]">
                <svg className="size-[8px]" viewBox="0 0 8 8"><path d="M0 0l8 8M8 0L0 8" stroke="currentColor" /></svg>
              </span>
            </span>
          </div>
        </div>
        <MonthAxis />
      </div>
      <div className="flex w-[8px] flex-col justify-center border-r border-l border-[#484848] bg-[#101010] pt-[22px]">
        <div className="flex h-[121px] items-center bg-[#3c3c3c]">
          <svg className="h-[20px] w-[5px]" viewBox="0 0 5 20"><path d="M1 0l4 10-4 10z" fill="#e0e0e0" /></svg>
        </div>
      </div>
      <QuotePanel />
    </div>
  );
}
